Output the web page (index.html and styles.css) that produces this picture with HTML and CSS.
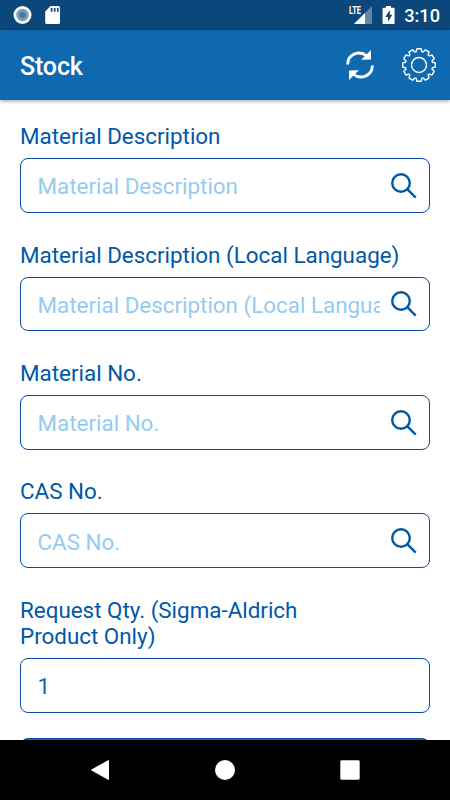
FILE: index.html
```html
<!DOCTYPE html>
<html lang="en">
<head>
<meta charset="utf-8">
<title>Stock</title>
<link rel="stylesheet" href="styles.css">
</head>
<body>
<svg width="0" height="0" class="defs" aria-hidden="true">
  <symbol id="search" viewBox="0 0 28 28">
    <circle cx="11" cy="11" r="8.8"/>
    <path d="M17.2 17.2 25.7 25.7"/>
  </symbol>
</svg>
<div class="screen">
  <div class="status">
    <svg class="status-left" width="50" height="22" viewBox="0 0 50 22">
      <circle cx="9.5" cy="11" r="9" fill="#fff"/>
      <circle cx="9.5" cy="11" r="6.2" fill="#7d9db8"/>
      <circle cx="9.5" cy="11" r="3.2" fill="#4c7797"/>
      <path d="M37.5 2H45.5Q47 2 47 3.5V18.5Q47 20 45.5 20H33.7Q32.2 20 32.2 18.5V7.5Z" fill="#fff"/>
      <path d="M38.6 4v3.8M41.7 4v3.8M44.8 4v3.8" stroke="#0b477a" stroke-width="1.7"/>
    </svg>
    <div class="signal">
      <span class="lte">LTE</span>
      <svg width="19" height="19" viewBox="0 0 19 19">
        <path d="M18 0V18H0Z" fill="#5f88aa"/>
        <path d="M11 7V18H0Z" fill="#fff"/>
      </svg>
    </div>
    <svg class="battery" width="14" height="20" viewBox="0 0 14 20">
      <path d="M4 1H9V2.8H11.5Q12.6 2.8 12.6 4V18Q12.6 19 11.5 19H1.7Q.6 19 .6 18V4Q.6 2.8 1.7 2.8H4Z" fill="#fff"/>
      <path d="M7.8 5 3.3 12H6V16.8L10.3 9.8H7.8Z" fill="#0b477a"/>
    </svg>
    <span class="clock">3:10</span>
  </div>
  <header class="header">
    <h1>Stock</h1>
    <svg class="refresh" width="30" height="32" viewBox="0 0 30 32">
      <g fill="none" stroke="#fff" stroke-width="2.9">
        <path d="M2.6 15.5C2.8 4.8 14.5.8 22 7"/>
        <path d="M27.4 16.5C27.2 27.2 15.5 31.2 8 25"/>
      </g>
      <path d="M26 .9V10.4L16.2 10.7Z" fill="#fff"/>
      <path d="M4 31.1V21.6L13.8 21.3Z" fill="#fff"/>
    </svg>
    <svg class="gear" width="36" height="36" viewBox="-18 -18 36 36">
      <g fill="none" stroke="#fff" stroke-width="1.4" stroke-linejoin="round">
        <path id="tooth" d="M-3.44-12.85-2.8-13.5-2.1-16.3H2.1L2.8-13.5 3.44-12.85"/>
        <use href="#tooth" transform="rotate(30)"/>
        <use href="#tooth" transform="rotate(60)"/>
        <use href="#tooth" transform="rotate(90)"/>
        <use href="#tooth" transform="rotate(120)"/>
        <use href="#tooth" transform="rotate(150)"/>
        <use href="#tooth" transform="rotate(180)"/>
        <use href="#tooth" transform="rotate(210)"/>
        <use href="#tooth" transform="rotate(240)"/>
        <use href="#tooth" transform="rotate(270)"/>
        <use href="#tooth" transform="rotate(300)"/>
        <use href="#tooth" transform="rotate(330)"/>
        <circle r="7.5"/>
      </g>
    </svg>
  </header>
  <main class="form">
    <div class="group">
      <div class="label">Material Description</div>
      <div class="field"><span class="hint">Material Description</span><svg class="search"><use href="#search"/></svg></div>
    </div>
    <div class="group">
      <div class="label">Material Description (Local Language)</div>
      <div class="field"><span class="hint">Material Description (Local Language)</span><svg class="search"><use href="#search"/></svg></div>
    </div>
    <div class="group">
      <div class="label">Material No.</div>
      <div class="field"><span class="hint">Material No.</span><svg class="search"><use href="#search"/></svg></div>
    </div>
    <div class="group">
      <div class="label">CAS No.</div>
      <div class="field"><span class="hint">CAS No.</span><svg class="search"><use href="#search"/></svg></div>
    </div>
    <div class="group">
      <div class="label">Request Qty. (Sigma-Aldrich<br>Product Only)</div>
      <div class="field"><span class="value">1</span></div>
    </div>
    <div class="submit"></div>
  </main>
  <nav class="nav">
    <svg width="20" height="22" viewBox="0 0 20 22"><path d="M1.5 11 18.5 1.5V20.5Z" fill="#fff" stroke="#fff" stroke-linejoin="round"/></svg>
    <svg width="20" height="20" viewBox="0 0 20 20"><circle cx="10" cy="10" r="10" fill="#fff"/></svg>
    <svg width="20" height="20" viewBox="0 0 20 20"><rect x=".3" y=".3" width="19.4" height="19.4" rx="1.4" fill="#fff"/></svg>
  </nav>
</div>
</body>
</html>
```
FILE: styles.css
```css
* { box-sizing: border-box; }
body { margin: 0; font-family: Roboto, "Liberation Sans", sans-serif; background: #fff; }
.defs { display: block; }
.screen { width: 450px; height: 800px; display: flex; flex-direction: column; overflow: hidden; }
.status { flex: none; height: 30px; background: #0b477a; display: flex; align-items: center; padding: 0 10px 0 13px; color: #fff; }
.status-left { margin-right: auto; }
.signal { display: flex; align-items: flex-start; height: 19px; }
.lte { font-size: 10px; line-height: 10px; font-weight: 700; width: 12px; transform: scaleX(.75); transform-origin: 0 0; margin-right: -7px; }
.battery { margin-left: 9px; }
.clock { font-size: 18.2px; font-weight: 500; line-height: 30px; margin-left: 8px; padding-top: 1px; }
.header { flex: none; height: 70px; background: #0f69af; display: flex; align-items: center; padding: 0 13px 0 20px; box-shadow: 0 1px 4px rgba(0, 0, 0, .4); z-index: 1; }
h1 { margin: 3px auto 0 0; color: #fff; font-size: 25px; letter-spacing: -.15px; font-weight: 500; line-height: 30px; }
.refresh { margin-right: 26px; }
.gear { display: block; }
.form { flex: 1; min-height: 0; overflow: hidden; padding: 23.3px 20px 0; color: #0058a8; }
.group { margin-bottom: 28.6px; }
.label { font-size: 22.4px; line-height: 26.3px; margin-bottom: 8.6px; }
.field { height: 54.9px; border: 1.3px solid #0a4ba4; border-radius: 8px; display: flex; align-items: center; padding: 1.6px 11px 0 16.5px; font-size: 22.4px; }
.hint { width: 342.5px; flex: none; overflow: hidden; white-space: nowrap; color: #96cbf0; }
.value { color: #0f69af; }
.search { flex: none; width: 28px; height: 28px; margin-left: 10px; margin-top: -1px; fill: none; stroke: #0058a8; stroke-width: 2.4; }
.submit { height: 55px; margin-top: -3.4px; background: #0f69af; border: 1px solid #0a4ba4; border-radius: 8px; }
.nav { flex: none; height: 60px; background: #000; display: flex; align-items: center; justify-content: space-between; padding: 0 90px; }
```
